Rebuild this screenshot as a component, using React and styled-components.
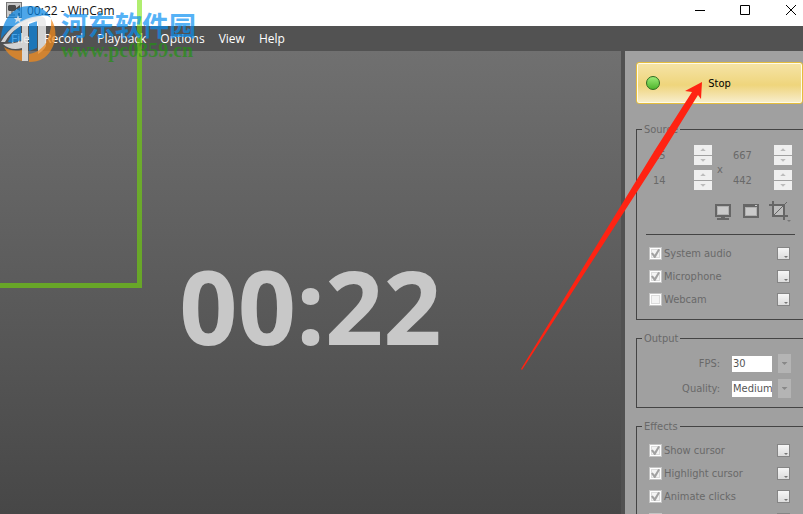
import { useState } from "react";
import styled, { createGlobalStyle } from "styled-components";

const MENU = ["File", "Record", "Playback", "Options", "View", "Help"];

const AppIcon = () => (
  <svg width="16" height="16" viewBox="0 0 16 16">
    <rect x="0.5" y="0.5" width="15" height="15" fill="#c9c9c9" stroke="#777" />
    <path d="M3 3h6l1 1v4l-1 1H3L2 8V4z" fill="#4a4a4a" />
    <path d="M10 6l4-3v6l-4-2z" fill="#4a4a4a" />
    <path d="M6 9v3M3 13h6" stroke="#4a4a4a" />
    <rect x="12" y="11" width="2" height="3" fill="#4a4a4a" />
  </svg>
);

const ScreenIcon = () => (
  <svg width="16" height="16" viewBox="0 0 16 16">
    <rect x="1" y="1" width="14" height="11" fill="#b0b0b0" stroke="#666" strokeWidth="2" />
    <rect x="3" y="3" width="10" height="7" fill="#cacaca" />
    <path d="M6 13h4v1h4v2H2v-2h4z" fill="#666" />
  </svg>
);

const WindowIcon = () => (
  <svg width="16" height="16" viewBox="0 0 16 16">
    <rect x="1" y="1" width="14" height="12" fill="#b0b0b0" stroke="#666" strokeWidth="2" />
    <rect x="3" y="4" width="10" height="7" fill="#cacaca" />
    <path d="M0 0h16v3H0z" fill="#666" />
    <path d="M12 1.500h2" stroke="#ccc" />
  </svg>
);

const CropIcon = () => (
  <svg width="22" height="22" viewBox="0 0 22 22">
    <rect x="5" y="5" width="9" height="9" fill="#bdbdbd" />
    <path d="M4 0v15h15M0 4h15v15" fill="none" stroke="#666" strokeWidth="2" />
    <path d="M5 14L18 1" stroke="#666" />
    <path d="M18 19h4l-2 2z" fill="#777" />
  </svg>
);

const Coordinate = ({ value, label }) => (
  <>
    <NumberInput aria-label={label} defaultValue={value} />
    <Spinner>
      <SpinButton aria-label={`${label} up`} $up />
      <SpinButton aria-label={`${label} down`} />
    </Spinner>
  </>
);

const Option = ({ name, checked, hidden }) => {
  const [on, setOn] = useState(checked);
  return (
    <OptionRow>
      <OptionLabel>
        <CheckBox
          type="checkbox"
          aria-label={name}
          checked={on}
          onChange={() => setOn(!on)}
        />
        {!hidden && name}
      </OptionLabel>
      <MoreButton aria-label={`${name} settings`} />
    </OptionRow>
  );
};

const Watermark = () => (
  <WatermarkBox>
    <svg width="57" height="58" viewBox="0 0 57 58">
      <g fill="#0984e0" fillOpacity="0.72">
        <path d="M1 34C2 14 14 1 29 1c10 0 18 4 22 12-4-3-8-3-13-1-13 2-29 10-37 22z" />
        <path d="M8 37c4-10 8-14 13-17v15c-4 2-9 3-13 2z" />
        <path d="M29 19l8-3v27l-8 3z" />
      </g>
      <g fill="#e9e9e9" fillOpacity="0.85">
        <path d="M1 37C9 22 22 13 38 11c6 0 8 2 8 8v22c-2 4-5 6-8 8V20c0-3-1-4-3-4C22 18 11 26 5 37z" />
        <path d="M22 19l6-3v40h-6V43c-7 2-14 1-19-4 7 0 13-1 19-3z" />
        <path d="M18 10l1 3 3 0-2 2 1 3-3-2-3 2 1-3-2-2 3 0z" />
      </g>
      <g fill="#f08a1c" fillOpacity="0.75">
        <path d="M4 42c6 4 12 4 18 3v11C14 54 7 49 4 42z" />
        <path d="M51 14c8 12 5 30-7 39-5 3-10 4-15 4v-8c7-1 13-5 17-11 3-7 6-15 5-24z" />
      </g>
    </svg>
    <WatermarkText>
      <SiteName>河东软件园</SiteName>
      <SiteUrl>www.pc0359.cn</SiteUrl>
    </WatermarkText>
  </WatermarkBox>
);

export default function App() {
  return (
    <Window>
      <GlobalStyle />
      <TitleBar>
        <AppIcon />
        <Title>00:22 - WinCam</Title>
        <WindowButton aria-label="Minimize">
          <svg width="11" height="11" viewBox="0 0 11 11">
            <path d="M0 5.500h10" stroke="#000" />
          </svg>
        </WindowButton>
        <WindowButton aria-label="Maximize">
          <svg width="11" height="11" viewBox="0 0 11 11">
            <path d="M.5.5h9v9h-9z" fill="none" stroke="#000" />
          </svg>
        </WindowButton>
        <WindowButton aria-label="Close">
          <svg width="11" height="11" viewBox="0 0 11 11">
            <path d="M1 0l10 10M11 0L1 10" stroke="#000" />
          </svg>
        </WindowButton>
      </TitleBar>
      <MenuBar>
        {MENU.map((item) => (
          <MenuItem key={item}>{item}</MenuItem>
        ))}
      </MenuBar>
      <Body>
        <Preview>
          <Timer>00:22</Timer>
        </Preview>
        <Sidebar>
          <StopButton>
            <Light />
            <span>Stop</span>
          </StopButton>

          <Group $top={8} $bottom={8}>
            <legend>Source</legend>
            <Coordinates>
              <Coordinate value="15" label="Left" />
              <Times>x</Times>
              <Coordinate value="667" label="Width" />
              <Coordinate value="14" label="Top" />
              <Coordinate value="442" label="Height" />
            </Coordinates>
            <Tools>
              <ToolButton aria-label="Full screen">
                <ScreenIcon />
              </ToolButton>
              <ToolButton aria-label="Window">
                <WindowIcon />
              </ToolButton>
              <ToolButton aria-label="Region">
                <CropIcon />
              </ToolButton>
            </Tools>
            <Rule />
            <Option name="System audio" checked />
            <Option name="Microphone" checked />
            <Option name="Webcam" checked={false} />
          </Group>

          <Group $top={5} $bottom={6}>
            <legend>Output</legend>
            <Field>
              <label htmlFor="fps">FPS:</label>
              <Select id="fps">
                <option>30</option>
              </Select>
              <DropButton aria-label="Open FPS" />
            </Field>
            <Field>
              <label htmlFor="quality">Quality:</label>
              <Select id="quality">
                <option>Medium</option>
              </Select>
              <DropButton aria-label="Open quality" />
            </Field>
          </Group>

          <Group $top={5} $bottom={8}>
            <legend>Effects</legend>
            <Option name="Show cursor" checked />
            <Option name="Highlight cursor" checked />
            <Option name="Animate clicks" checked />
            <Option name="More effects" checked={false} hidden />
          </Group>
        </Sidebar>
      </Body>
      <CaptureFrame />
      <Watermark />
      <Pointer width="182" height="290" viewBox="0 0 182 290">
        <path d="M0 287L134 68 171 10 164 9 181 0l-1 17-3-4-34 55L1 288z" fill="#ff2312" />
      </Pointer>
    </Window>
  );
}

const GlobalStyle = createGlobalStyle`
  * {
    box-sizing: border-box;
  }
  body {
    margin: 0;
    overflow: hidden;
  }
  button {
    padding: 0;
    border: none;
    background: none;
    font: inherit;
  }
`;

const Window = styled.div`
  position: relative;
  display: flex;
  flex-direction: column;
  height: 100vh;
  overflow: hidden;
  font-family: "Open Sans", sans-serif;
`;

const TitleBar = styled.header`
  display: flex;
  flex-shrink: 0;
  height: 26px;
  padding: 2px 7px 0 6px;
  background: #fff;
`;

const Title = styled.h1`
  flex: 1;
  margin: 0 0 0 5px;
  font-size: 12px;
  font-weight: 400;
  line-height: 18px;
  color: #111;
`;

const WindowButton = styled.button`
  width: 11px;
  height: 11px;
  margin: 3px 0 0 34px;
  svg {
    display: block;
  }
`;

const MenuBar = styled.nav`
  display: flex;
  flex-shrink: 0;
  gap: 14px;
  height: 25px;
  padding-left: 11px;
  background: #525252;
`;

const MenuItem = styled.button`
  font-size: 12px;
  color: #fff;
`;

const Body = styled.main`
  display: flex;
  flex: 1;
  min-height: 0;
`;

const Preview = styled.section`
  display: flex;
  flex: 1;
  justify-content: center;
  align-items: center;
  padding-top: 46px;
  border-right: 4px solid #515151;
  background: linear-gradient(#707070, #474747);
`;

const Timer = styled.div`
  font-size: 102px;
  font-weight: 700;
  line-height: 140px;
  color: #c8c8c8;
`;

const Sidebar = styled.aside`
  flex: 0 0 178px;
  padding: 11px 0 0 11px;
  background: #a0a0a0;
  overflow: hidden;
  font-family: "DejaVu Sans Condensed", "Liberation Sans", sans-serif;
  font-size: 11px;
  line-height: 15px;
  color: #696969;
`;

const StopButton = styled.button`
  display: grid;
  grid-template-columns: 14px 1fr 14px;
  align-items: center;
  width: 100%;
  height: 42px;
  margin-bottom: 18px;
  padding: 0 9px;
  border: 1px solid #e5bd3c;
  border-radius: 3px;
  background: linear-gradient(#f5e4a8, #efd57c 55%, #f3dfa0 75%, #f8efce);
  box-shadow: inset 0 0 0 1px #fffbe8;
  color: #000;
`;

const Light = styled.i`
  width: 14px;
  height: 14px;
  border: 1px solid #2b6a20;
  border-radius: 50%;
  background: linear-gradient(#9bea76, #4fb52c);
`;

const Group = styled.fieldset`
  min-width: 0;
  margin: 0 0 11px;
  padding: ${({ $top, $bottom }) => `${$top}px 8px ${$bottom}px 5px`};
  border: 1px solid #444;
  border-right: none;
  legend {
    padding: 0 2px;
  }
`;

const Coordinates = styled.div`
  display: grid;
  grid-template-columns: 41px 18px 21px 41px 18px;
  grid-auto-rows: 20px;
  row-gap: 5px;
  padding-left: 11px;
`;

const NumberInput = styled.input`
  width: 100%;
  padding: 0;
  border: none;
  background: none;
  font: inherit;
  color: inherit;
`;

const Spinner = styled.div`
  display: grid;
  grid-template-rows: 1fr 1fr;
  row-gap: 1px;
`;

const SpinButton = styled.button`
  display: grid;
  place-items: center;
  background: #efefef;
  &::after {
    content: "";
    width: 6px;
    height: 3px;
    background: #bcbcbc;
    clip-path: ${({ $up }) =>
      $up ? "polygon(0 100%, 50% 0, 100% 100%)" : "polygon(0 0, 100% 0, 50% 100%)"};
  }
`;

const Times = styled.span`
  grid-row: 1 / span 2;
  grid-column: 3;
  align-self: center;
  padding: 4px 0 0 5px;
`;

const Tools = styled.div`
  display: flex;
  justify-content: flex-end;
  align-items: center;
  gap: 12px;
  height: 22px;
  margin: 11px 4px 11px 0;
`;

const ToolButton = styled.button`
  &:last-child {
    margin-left: -2px;
  }
  svg {
    display: block;
  }
`;

const Rule = styled.hr`
  height: 1px;
  margin: 0 0 7px 4px;
  border: none;
  background: #444;
`;

const OptionRow = styled.div`
  display: flex;
  justify-content: space-between;
  align-items: center;
  height: 23px;
  padding: 0 5px 0 7px;
`;

const OptionLabel = styled.label`
  display: flex;
  align-items: center;
  gap: 2px;
`;

const CheckBox = styled.input`
  appearance: none;
  display: grid;
  place-items: center;
  width: 13px;
  height: 13px;
  margin: 0;
  border: 1px solid #c4c4c4;
  background: #f4f4f4;
  box-shadow: inset 0 0 0 1px #fff, inset 0 0 0 2px #dcdcdc;
  &:checked::after {
    content: "";
    width: 9px;
    height: 9px;
    background: #a2a2a2;
    clip-path: polygon(0 50%, 20% 40%, 40% 65%, 80% 0, 100% 8%, 48% 100%, 36% 100%);
  }
`;

const MoreButton = styled.button`
  display: flex;
  justify-content: flex-end;
  align-items: flex-end;
  width: 13px;
  height: 13px;
  padding: 1px;
  border: 1px solid #858585;
  background: linear-gradient(#f6f6f6, #dcdcdc);
  &::after {
    content: "";
    width: 4px;
    height: 2px;
    background: #777;
    clip-path: polygon(0 0, 100% 0, 50% 100%);
  }
`;

const Field = styled.div`
  display: grid;
  grid-template-columns: 1fr 40px 19px;
  align-items: center;
  height: 25px;
  padding-right: 4px;
  label {
    padding-right: 12px;
    text-align: right;
  }
`;

const Select = styled.select`
  appearance: none;
  width: 40px;
  height: 16px;
  padding: 0 0 0 1px;
  border: none;
  border-radius: 0;
  background: #fff;
  font: inherit;
  color: #555;
`;

const DropButton = styled.button`
  display: grid;
  place-items: center;
  width: 13px;
  height: 19px;
  margin-left: 6px;
  background: #b4b4b4;
  &::after {
    content: "";
    width: 6px;
    height: 3px;
    background: #888;
    clip-path: polygon(0 0, 100% 0, 50% 100%);
  }
`;

const CaptureFrame = styled.div`
  position: absolute;
  top: 0;
  left: 0;
  width: 142px;
  height: 288px;
  border: solid rgba(115, 225, 0, 0.56);
  border-width: 0 5px 5px 0;
  pointer-events: none;
`;

const WatermarkBox = styled.div`
  position: absolute;
  top: 5px;
  left: 0;
  display: flex;
  gap: 4px;
  pointer-events: none;
`;

const WatermarkText = styled.div`
  padding-top: 5px;
`;

const SiteName = styled.div`
  font-family: "Noto Sans CJK SC", sans-serif;
  font-size: 27px;
  font-weight: 700;
  line-height: 30px;
  color: rgba(9, 143, 243, 0.7);
`;

const SiteUrl = styled.div`
  font-family: "Liberation Serif", serif;
  font-size: 20px;
  font-weight: 700;
  line-height: 20px;
  color: rgba(35, 145, 20, 0.7);
`;

const Pointer = styled.svg`
  position: absolute;
  top: 82px;
  right: 100px;
  pointer-events: none;
`;
